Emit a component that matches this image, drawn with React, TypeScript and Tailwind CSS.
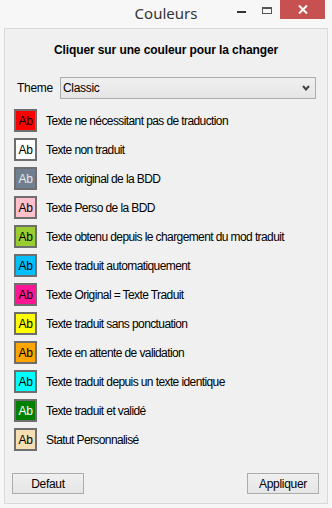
import React from 'react';

type Status = { label: string; bg: string; fg: string };

const statuses: Status[] = [
  { label: 'Texte ne nécessitant pas de traduction', bg: 'bg-[#ff0000]', fg: 'text-black' },
  { label: 'Texte non traduit', bg: 'bg-white', fg: 'text-black' },
  { label: 'Texte original de la BDD', bg: 'bg-[#708090]', fg: 'text-[#e8e8e8]' },
  { label: 'Texte Perso de la BDD', bg: 'bg-[#ffc0cb]', fg: 'text-black' },
  { label: 'Texte obtenu depuis le chargement du mod traduit', bg: 'bg-[#9acd32]', fg: 'text-black' },
  { label: 'Texte traduit automatiquement', bg: 'bg-[#00bfff]', fg: 'text-black' },
  { label: 'Texte Original = Texte Traduit', bg: 'bg-[#ff1493]', fg: 'text-black' },
  { label: 'Texte traduit sans ponctuation', bg: 'bg-[#ffff00]', fg: 'text-black' },
  { label: 'Texte en attente de validation', bg: 'bg-[#ffa500]', fg: 'text-black' },
  { label: 'Texte traduit depuis un texte identique', bg: 'bg-[#00ffff]', fg: 'text-black' },
  { label: 'Texte traduit et validé', bg: 'bg-[#008000]', fg: 'text-white' },
  { label: 'Statut Personnalisé', bg: 'bg-[#f5deb3]', fg: 'text-black' },
];

const font = 'font-["Liberation_Sans",Arial,sans-serif]';

function TitleBar() {
  return (
    <div className="relative h-[28px] flex items-start justify-center">
      <span className='mt-[4px] text-[15px] leading-[18px] text-[#333] font-["Noto_Sans","Open_Sans",sans-serif]'>
        Couleurs
      </span>
      <div className="absolute right-[7px] top-0 flex items-start">
        {/* minimise */}
        <div className="w-[26px] h-[19px] flex items-start justify-center">
          <div className="mt-[11px] w-[9px] h-[2px] bg-[#333]" />
        </div>
        {/* maximise */}
        <div className="w-[26px] h-[19px] flex items-start justify-center">
          <div className="mt-[7px] w-[10px] h-[7px] border border-[#555] border-t-2" />
        </div>
        {/* close */}
        <div className="w-[45px] h-[19px] bg-[#c75050] flex items-center justify-center">
          <svg width="10" height="9" viewBox="0 0 10 9">
            <path d="M1 0.5 L9 8.5 M9 0.5 L1 8.5" stroke="white" strokeWidth="2" />
          </svg>
        </div>
      </div>
    </div>
  );
}

function Button({ children }: { children: React.ReactNode }) {
  return (
    <div className="w-[72px] h-[21px] border border-[#acacac] bg-gradient-to-b from-[#f0f0f0] to-[#e5e5e5] flex items-center justify-center text-[12px] tracking-[-0.3px] text-black">
      {children}
    </div>
  );
}

export default function App() {
  return (
    <div className={`w-[332px] h-[508px] bg-[#f7f7f7] ${font}`}>
      <TitleBar />
      <div className="mx-[4px] h-[476px] border border-[#d9d9d9] bg-[#f0f0f0] flex flex-col">
        <div className="mt-[14px] text-center text-[12px] leading-[14px] font-bold text-black tracking-[-0.1px]">
          Cliquer sur une couleur pour la changer
        </div>

        <div className="mt-[20px] flex items-center h-[22px]">
          <span className="ml-[12px] w-[43px] text-[12px] text-black tracking-[-0.3px]">Theme</span>
          <div className="w-[256px] h-[22px] border border-[#acacac] bg-gradient-to-b from-[#f0f0f0] to-[#e5e5e5] flex items-center justify-between pl-[2px] pr-[5px]">
            <span className="text-[12px] text-black tracking-[-0.3px]">Classic</span>
            <svg width="8" height="6" viewBox="0 0 8 6">
              <path d="M1 1 L4 4.5 L7 1" stroke="#444" strokeWidth="2" fill="none" />
            </svg>
          </div>
        </div>

        <div className="mt-[10px] ml-[9px] flex flex-col gap-[6px]">
          {statuses.map((s) => (
            <div key={s.label} className="flex items-center h-[23px] gap-[9px]">
              <div
                className={`w-[23px] h-[23px] border-2 border-[#6e6e6e] ${s.bg} ${s.fg} flex items-center justify-center text-[12px] leading-none tracking-[-0.4px]`}
              >
                Ab
              </div>
              <span className="text-[12px] text-black tracking-[-0.6px]">{s.label}</span>
            </div>
          ))}
        </div>

        <div className="mt-[22px] flex justify-between pl-[7px] pr-[8px]">
          <Button>Defaut</Button>
          <Button>Appliquer</Button>
        </div>
      </div>
    </div>
  );
}
